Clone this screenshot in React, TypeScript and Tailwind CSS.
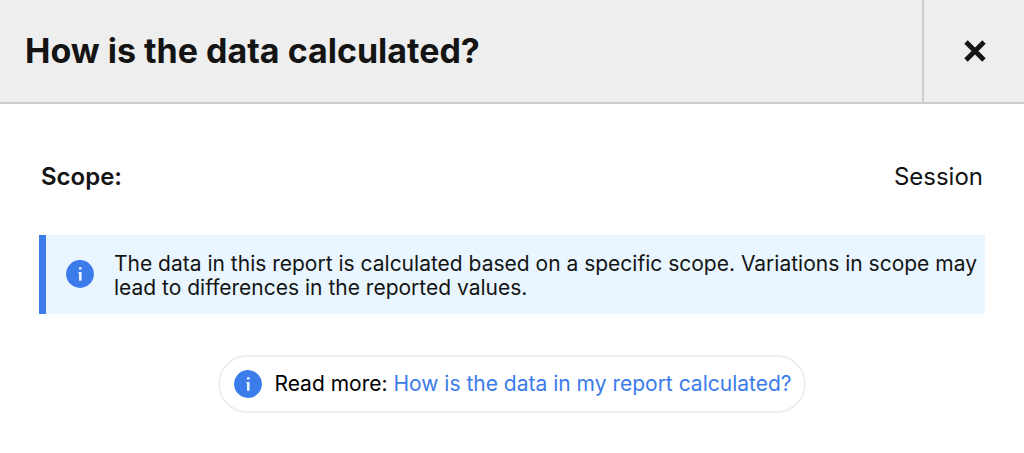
const InfoIcon = () => (
  <svg className="size-7 shrink-0" viewBox="0 0 28 28" aria-hidden="true">
    <circle cx="14" cy="14" r="13.9" fill="#3b7bea" />
    <path d="M12.9 7.2h2.7v2.4h-2.7zM12.4 12h3.2v8.8H13v-7.4h-.6z" fill="#e9f6ff" />
  </svg>
);

const CloseIcon = () => (
  <svg className="size-6" viewBox="0 0 24 24" aria-hidden="true">
    <path d="M3 3l18 18M21 3L3 21" stroke="#141414" strokeWidth="4.8" />
  </svg>
);

export default function App() {
  return (
    <section className="bg-white font-['Inter',sans-serif] text-[#141414]">
      <header className="flex h-[104px] border-b-2 border-[#cccccc] bg-[#eeeeee]">
        <h1 className="flex flex-1 items-center pb-0.5 pl-[25px] text-[34px] font-bold">
          How is the data calculated?
        </h1>
        <button
          type="button"
          aria-label="Close"
          className="flex w-[102px] items-center justify-center border-l-2 border-[#cccccc] pl-0.5"
        >
          <CloseIcon />
        </button>
      </header>

      <div className="px-[39px] pt-[57px] pb-10">
        <dl className="flex justify-between px-0.5 text-2xl">
          <dt className="font-semibold">Scope:</dt>
          <dd>Session</dd>
        </dl>

        <div className="mt-[42px] flex items-start gap-5 border-l-[7px] border-[#3b7bea] bg-[#e9f6ff] pt-[17px] pr-1 pb-[14px] pl-5">
          <div className="pt-2">
            <InfoIcon />
          </div>
          <p className="text-[21px] leading-6">
            The data in this report is calculated based on a specific scope.
            Variations in scope may lead to differences in the reported values.
          </p>
        </div>

        <div className="mt-[41px] flex justify-center">
          <div className="flex items-center gap-3 rounded-full border-2 border-[#eeeeee] py-[13px] pr-3 pl-[14px]">
            <InfoIcon />
            <p className="text-[21px] leading-7 text-black">
              Read more:{" "}
              <a href="#report-data" className="text-[#3b7bea]">
                How is the data in my report calculated?
              </a>
            </p>
          </div>
        </div>
      </div>
    </section>
  );
}
